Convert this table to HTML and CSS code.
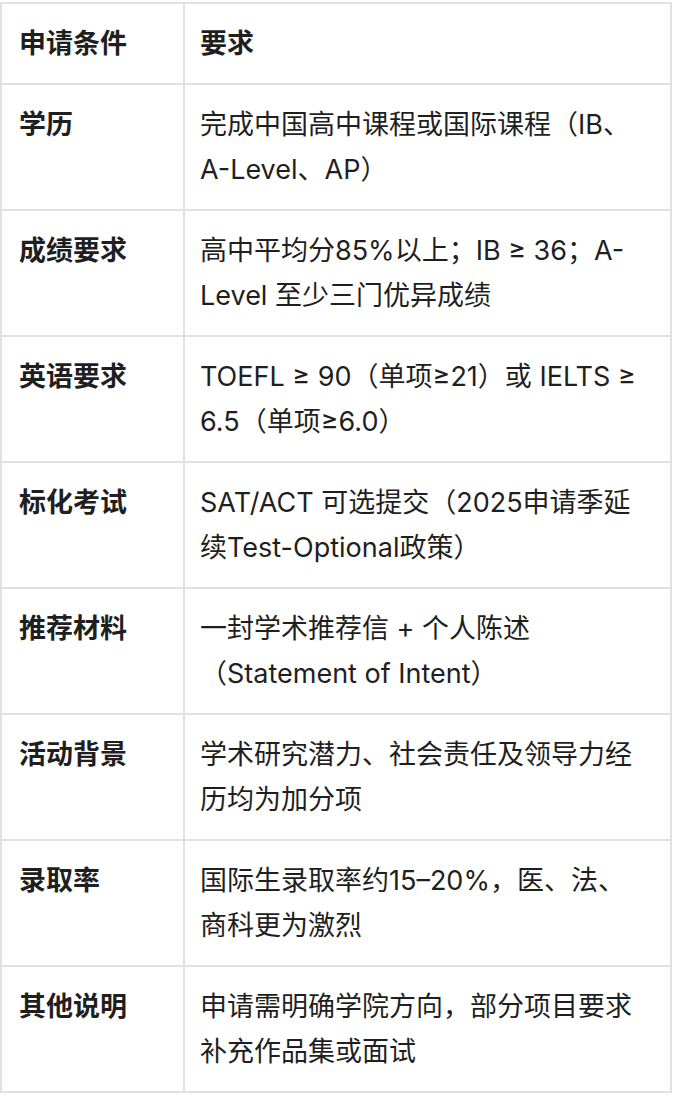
FILE: index.html
```html
<!DOCTYPE html>
<html lang="zh-CN">
<head>
<meta charset="utf-8">
<link rel="stylesheet" href="styles.css">
</head>
<body>
<table class="req">
  <colgroup><col class="c1"><col class="c2"></colgroup>
  <thead>
    <tr><th>申请条件</th><th>要求</th></tr>
  </thead>
  <tbody>
    <tr><td class="k">学历</td><td>完成中国高中课程或国际课程（IB、A-Level、AP）</td></tr>
    <tr><td class="k">成绩要求</td><td>高中平均分85%以上；IB ≥ 36；A-Level 至少三门优异成绩</td></tr>
    <tr><td class="k">英语要求</td><td>TOEFL ≥ 90（单项≥21）或 IELTS ≥ 6.5（单项≥6.0）</td></tr>
    <tr><td class="k">标化考试</td><td>SAT/ACT 可选提交（2025申请季延续Test-Optional政策）</td></tr>
    <tr><td class="k">推荐材料</td><td>一封学术推荐信 + 个人陈述（Statement of Intent）</td></tr>
    <tr><td class="k">活动背景</td><td>学术研究潜力、社会责任及领导力经历均为加分项</td></tr>
    <tr><td class="k">录取率</td><td>国际生录取率约15–20%，医、法、商科更为激烈</td></tr>
    <tr><td class="k">其他说明</td><td>申请需明确学院方向，部分项目要求补充作品集或面试</td></tr>
  </tbody>
</table>
</body>
</html>
```

FILE: styles.css
```css
html, body {
  margin: 0;
  padding: 0;
  background: #ffffff;
}
body {
  padding-top: 2px;
  font-family: Inter, "Noto Sans CJK SC", sans-serif;
  color: #1f1f21;
}
.req {
  border-collapse: collapse;
  width: 672px;
  table-layout: fixed;
  font-size: 27px;
  line-height: 45px;
}
.c1 { width: 183px; }
.req th, .req td {
  border: 2px solid #e0e0e5;
  padding: 17px 20px 17px 15px;
  text-align: left;
  vertical-align: top;
}
.req th:first-child, .req td.k {
  padding-left: 17px;
}
.req th {
  font-weight: 700;
}
.req td.k {
  font-weight: 700;
}
```
